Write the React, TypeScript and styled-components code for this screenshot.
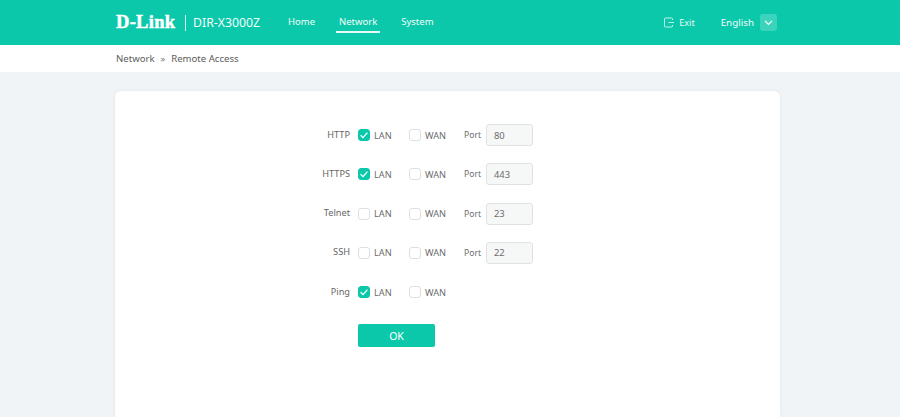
import React from "react";
import styled, { createGlobalStyle } from "styled-components";

const Global = createGlobalStyle`
  html, body { margin: 0; padding: 0; height: 417px; overflow: hidden; background: #f0f4f7; }
  * { box-sizing: border-box; }
  body { font-family: "Noto Sans", "Open Sans", sans-serif; }
`;

const Header = styled.header`
  height: 45px;
  background: #0bc8aa;
  display: flex;
  align-items: center;
  padding: 0 123px 0 116px;
  color: #fff;
`;
const Logo = styled.span`
  font-family: "Liberation Serif", serif;
  font-weight: 700;
  font-size: 18.5px;
  letter-spacing: 0.3px;
  width: 61px;
  white-space: nowrap;
  -webkit-text-stroke: 0.5px #fff;
`;
const Divider = styled.span`
  width: 1px;
  height: 16px;
  background: rgba(255, 255, 255, 0.85);
  margin: 0 7px 0 8px;
`;
const Model = styled.span`
  font-size: 12.3px;
  width: 92px;
  white-space: nowrap;
  opacity: 0.95;
`;
const Nav = styled.nav`
  display: flex;
  gap: 18px;
  height: 100%;
  align-items: flex-start;
`;
const NavItem = styled.a<{ $active?: boolean }>`
  font-size: 9.5px;
  padding: 13px 3px 0;
  display: flex;
  align-items: center;
  height: 33px;
  border-bottom: 2px solid ${(p) => (p.$active ? "#e6fbf6" : "transparent")};
  color: #f4fdfb;
  white-space: nowrap;
  line-height: 1;
`;
const HeaderRight = styled.div`
  margin-left: auto;
  display: flex;
  align-items: center;
`;
const Exit = styled.span`
  display: flex;
  align-items: center;
  gap: 5px;
  font-size: 9px;
  margin-right: 26px;
  color: #e9fbf7;
`;
const Lang = styled.span`
  font-size: 9.8px;
  margin-right: 6px;
  color: #f2fdfb;
`;
const LangBtn = styled.span`
  width: 17px;
  height: 17px;
  border-radius: 3px;
  background: rgba(255, 255, 255, 0.2);
  display: flex;
  align-items: center;
  justify-content: center;
`;
const Crumbs = styled.div`
  height: 27px;
  background: #fff;
  display: flex;
  align-items: center;
  padding-left: 116px;
  font-size: 9.6px;
  color: #5c5c5c;
  gap: 6px;
`;
const Sep = styled.span`
  color: #777;
  font-size: 9px;
`;
const Main = styled.main`
  padding: 19px 120px 0 115px;
`;
const Card = styled.section`
  background: #fff;
  border-radius: 6px 6px 0 0;
  height: 326px;
  padding-top: 33px;
  box-shadow: 0 0 3px rgba(180, 190, 200, 0.25);
`;
const Row = styled.div`
  display: flex;
  align-items: center;
  height: 22px;
  margin-bottom: 17.3px;
`;
const RowLabel = styled.span`
  width: 235px;
  text-align: right;
  font-size: 9.2px;
  color: #666;
  margin-top: -2px;
`;
const Option = styled.label`
  display: flex;
  align-items: center;
  gap: 4px;
  width: 51px;
  font-size: 9.2px;
  color: #6c6c6c;
  &:first-of-type { margin-left: 8px; }
`;
const Box = styled.span<{ $on?: boolean }>`
  width: 12px;
  height: 12px;
  border-radius: 3px;
  flex: none;
  display: flex;
  align-items: center;
  justify-content: center;
  background: ${(p) => (p.$on ? "#0bc8aa" : "#fff")};
  border: 1px solid ${(p) => (p.$on ? "#0bc8aa" : "#dcdfe3")};
`;
const PortLabel = styled.span`
  font-size: 8.6px;
  color: #6c6c6c;
  margin-left: 4px;
  width: 22px;
`;
const PortValue = styled.span`
  width: 47px;
  height: 22px;
  background: #f6f7f7;
  border: 1px solid #dfe2e5;
  border-radius: 3px;
  font-size: 9.4px;
  color: #6c6c6c;
  display: flex;
  align-items: center;
  padding-left: 7px;
`;
const Actions = styled.div`
  display: flex;
  padding: 4px 0 0 243px;
`;
const OkButton = styled.button`
  width: 77px;
  height: 23px;
  border: none;
  border-radius: 2px;
  background: #0bc8aa;
  color: #fff;
  font-family: inherit;
  font-size: 10.5px;
  padding: 0;
`;

const Check = () => (
  <svg width="10" height="10" viewBox="0 0 10 10" fill="none" stroke="#fff" strokeWidth="1.3">
    <path d="M1.6 5.2 4 7.6 8.4 2.6" />
  </svg>
);

const Opt = ({ label, on }: { label: string; on?: boolean }) => (
  <Option>
    <Box $on={on}>{on && <Check />}</Box>
    {label}
  </Option>
);

const rows = [
  { name: "HTTP", lan: true, port: "80" },
  { name: "HTTPS", lan: true, port: "443" },
  { name: "Telnet", lan: false, port: "23" },
  { name: "SSH", lan: false, port: "22" },
  { name: "Ping", lan: true },
];

export default function App() {
  return (
    <>
      <Global />
      <Header>
        <Logo>D-Link</Logo>
        <Divider />
        <Model>DIR-X3000Z</Model>
        <Nav>
          <NavItem>Home</NavItem>
          <NavItem $active>Network</NavItem>
          <NavItem>System</NavItem>
        </Nav>
        <HeaderRight>
          <Exit>
            <svg width="10" height="11" viewBox="0 0 10 11" fill="none" stroke="#bff3e8" strokeWidth="1">
              <path d="M8.5 3V2a1 1 0 0 0-1-1h-6a1 1 0 0 0-1 1v7a1 1 0 0 0 1 1h6a1 1 0 0 0 1-1V8M4.5 5.5H10" />
            </svg>
            Exit
          </Exit>
          <Lang>English</Lang>
          <LangBtn>
            <svg width="9" height="9" viewBox="0 0 9 9" fill="none" stroke="#fff" strokeWidth="1.2">
              <path d="M1 2.8 4.5 6.3 8 2.8" />
            </svg>
          </LangBtn>
        </HeaderRight>
      </Header>
      <Crumbs>
        <span>Network</span>
        <Sep>»</Sep>
        <span>Remote Access</span>
      </Crumbs>
      <Main>
        <Card>
          {rows.map((r) => (
            <Row key={r.name}>
              <RowLabel>{r.name}</RowLabel>
              <Opt label="LAN" on={r.lan} />
              <Opt label="WAN" />
              {r.port && (
                <>
                  <PortLabel>Port</PortLabel>
                  <PortValue>{r.port}</PortValue>
                </>
              )}
            </Row>
          ))}
          <Actions>
            <OkButton>OK</OkButton>
          </Actions>
        </Card>
      </Main>
    </>
  );
}
